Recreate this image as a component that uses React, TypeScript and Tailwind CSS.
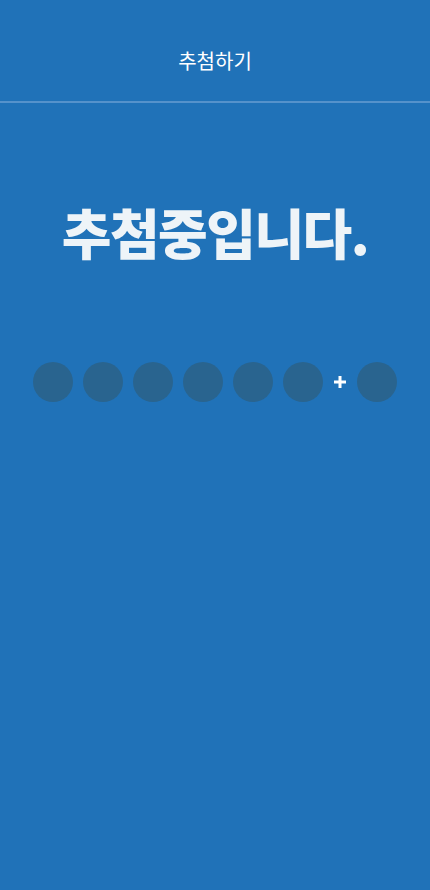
export default function App() {
  const balls = [1, 2, 3, 4, 5, 6];
  return (
    <div
      className="min-h-[890px] w-full bg-[#2072b8] text-white"
      style={{ fontFamily: '"Noto Sans CJK KR", "Noto Sans", sans-serif' }}
    >
      {/* Header */}
      <div className="flex h-[103px] justify-center border-b-2 border-[#5592cb] pt-[47px]">
        <h1 className="text-[20px] font-normal leading-7">추첨하기</h1>
      </div>

      {/* Status */}
      <div className="flex justify-center pt-[102px]">
        <p className="text-[54px] font-black leading-none tracking-[-1.5px] text-[#eef4f8]">
          추첨중입니다.
        </p>
      </div>

      {/* Balls */}
      <div className="flex items-center justify-center gap-[10px] pt-[103px]">
        {balls.map((b) => (
          <div key={b} className="h-10 w-10 rounded-full bg-[#29648f]" />
        ))}
        <svg width="12" height="12" viewBox="0 0 12 12" className="mx-[1px]">
          <rect x="0" y="4.5" width="12" height="3" fill="#ffffff" />
          <rect x="4.5" y="0" width="3" height="12" fill="#ffffff" />
        </svg>
        <div className="h-10 w-10 rounded-full bg-[#29648f]" />
      </div>
    </div>
  );
}
